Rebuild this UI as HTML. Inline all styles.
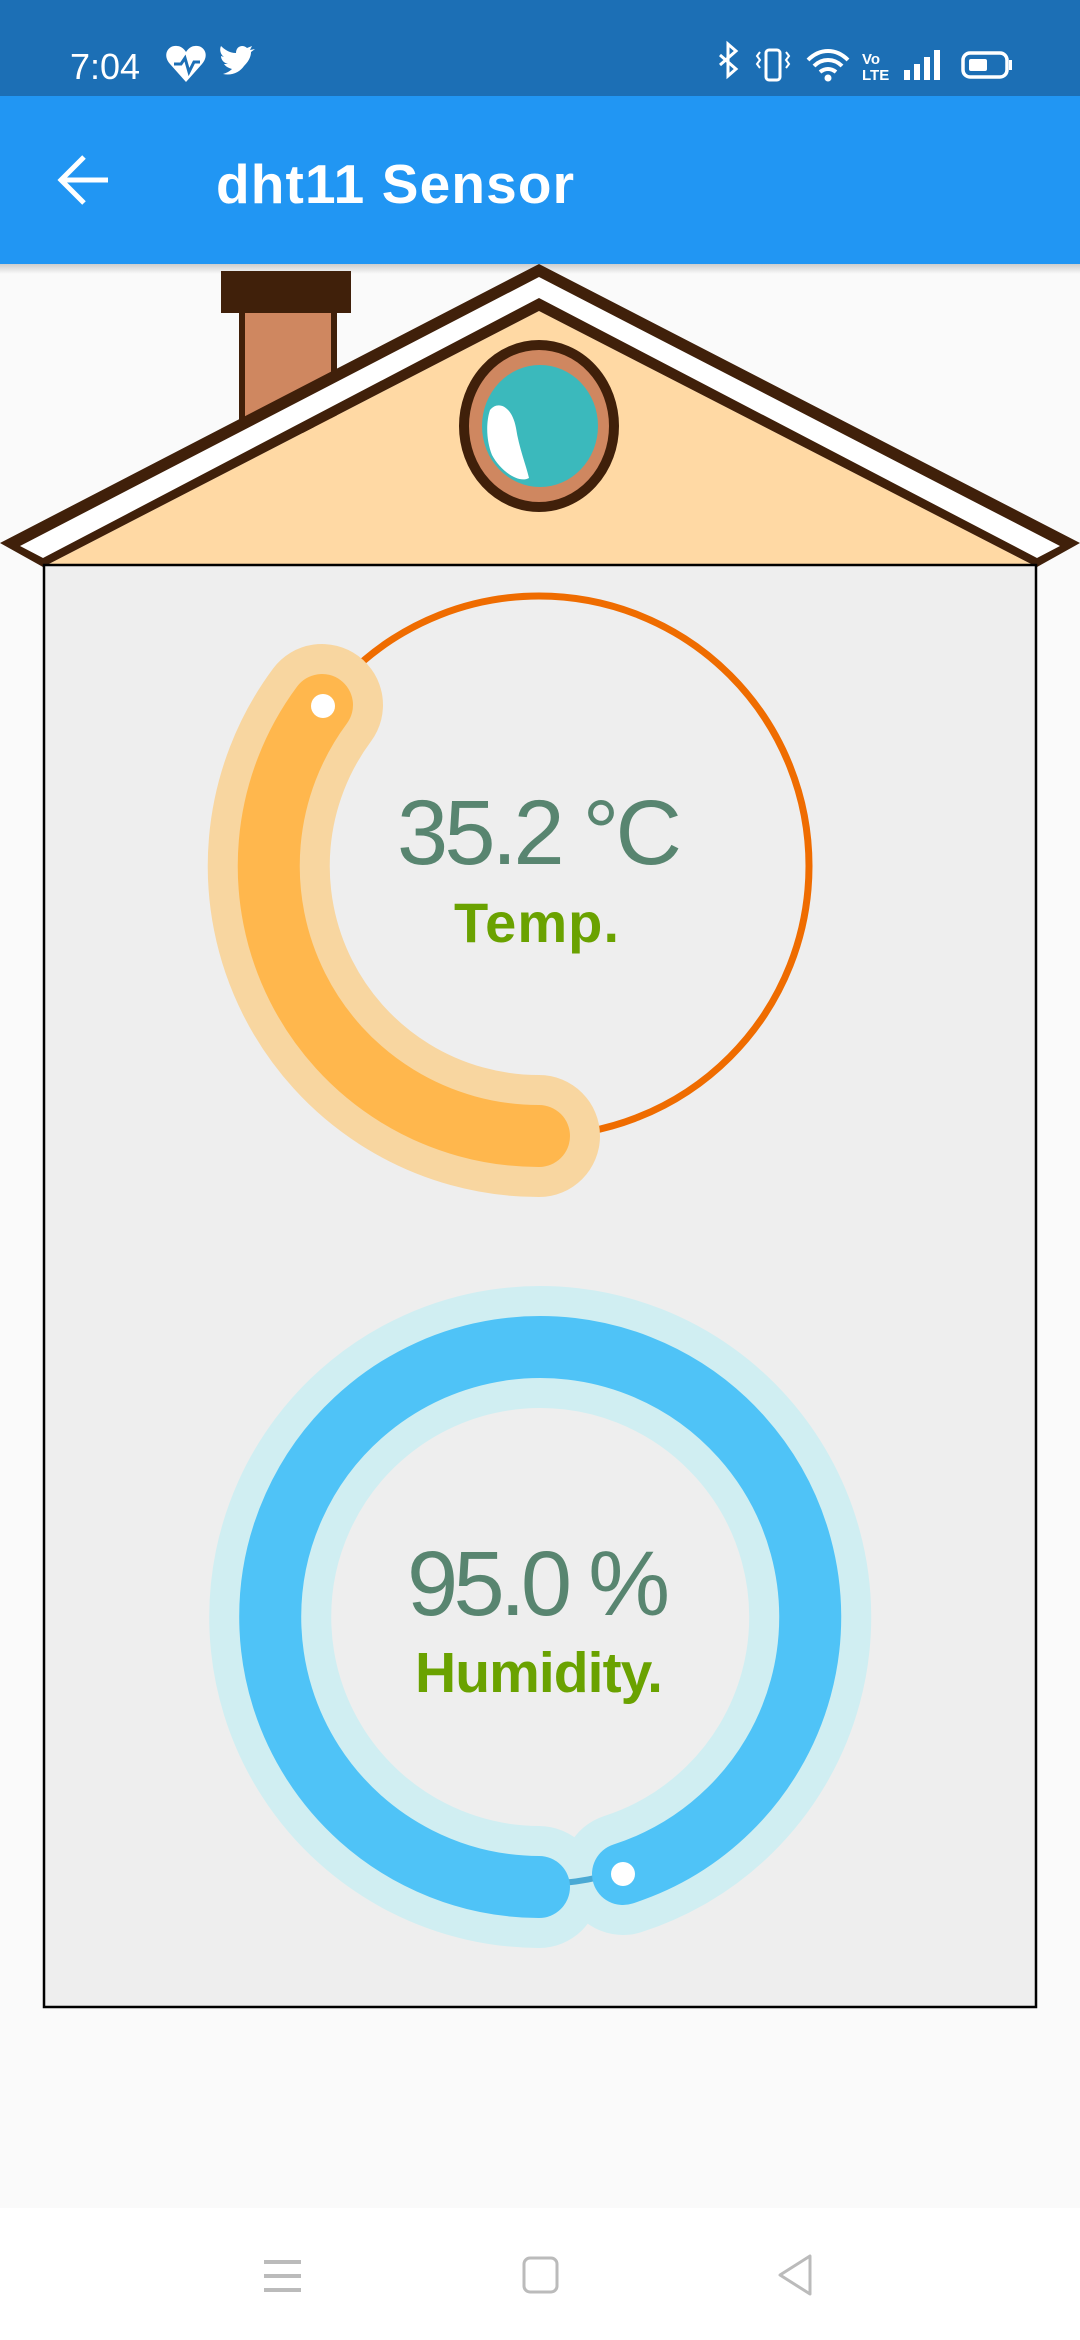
<!DOCTYPE html>
<html><head><meta charset="utf-8"><style>
html,body{margin:0;padding:0;width:1080px;height:2340px;overflow:hidden;background:#fafafa}
svg{display:block}
</style></head><body>
<svg width="1080" height="2340" viewBox="0 0 1080 2340" xmlns="http://www.w3.org/2000/svg" font-family="Liberation Sans, sans-serif">
<defs>
<linearGradient id="sh" x1="0" y1="0" x2="0" y2="1"><stop offset="0" stop-color="#000" stop-opacity="0.18"/><stop offset="1" stop-color="#000" stop-opacity="0"/></linearGradient>
</defs>
<rect x="0" y="0" width="1080" height="2340" fill="#fafafa"/>
<!-- status bar -->
<rect x="0" y="0" width="1080" height="96" fill="#1c6fb5"/>
<text x="70" y="79" font-size="36" fill="#fff">7:04</text>
<path d="M186,82 L170,64 C162,55 168,45 177,46 C181,46 184,49 186,52 C188,49 191,46 195,46 C204,45 210,55 202,64 Z" fill="#fff"/>
<path d="M174,64 L181,64 L185,58 L189,72 L194,62 L200,62" fill="none" stroke="#1c6fb5" stroke-width="3"/>
<path d="M223,74 C232,76 240,72 244,66 C250,60 251,55 251,52 L255,49 L250,50 L252,46 L247,48 C243,44 236,46 236,53 C229,53 224,49 221,46 C219,50 221,55 224,57 L221,56 C221,60 224,63 228,64 L224,64 C226,67 229,68 232,69 C229,72 226,73 223,74 Z" fill="#fff"/>
<path d="M720,55 L736,69 L728,76 L728,44 L736,51 L720,65" fill="none" stroke="#fff" stroke-width="3"/>
<rect x="766" y="50" width="14" height="30" rx="3" fill="none" stroke="#fff" stroke-width="3"/>
<path d="M760,52 l-3,4 l3,4 l-3,4 l3,4 M786,52 l3,4 l-3,4 l3,4 l-3,4" fill="none" stroke="#fff" stroke-width="2"/>
<path d="M808,60 C820,48 836,48 848,60 M814,66 C822,58 834,58 842,66 M820,72 C825,68 831,68 836,72" fill="none" stroke="#fff" stroke-width="4"/>
<circle cx="828" cy="78" r="3.5" fill="#fff"/>
<text x="862" y="64" font-size="15" font-weight="bold" fill="#fff">Vo</text>
<text x="862" y="80" font-size="15" font-weight="bold" fill="#fff">LTE</text>
<rect x="904" y="70" width="6" height="10" fill="#fff"/><rect x="914" y="64" width="6" height="16" fill="#fff"/><rect x="924" y="57" width="6" height="23" fill="#fff"/><rect x="934" y="50" width="6" height="30" fill="#fff"/>
<rect x="963" y="53" width="44" height="24" rx="7" fill="none" stroke="#fff" stroke-width="3.5"/>
<rect x="969" y="59" width="18" height="12" rx="2" fill="#fff"/>
<rect x="1009" y="60" width="3" height="10" fill="#fff"/>
<!-- app bar -->
<rect x="0" y="96" width="1080" height="168" fill="#2196f3"/>
<rect x="0" y="264" width="1080" height="10" fill="url(#sh)"/>
<path d="M108,180 L62,180 M84,157 L61,180 L84,203" fill="none" stroke="#fff" stroke-width="5"/>
<text x="216" y="203" font-size="55" font-weight="bold" fill="#fff" textLength="358">dht11 Sensor</text>
<!-- chimney -->
<rect x="242" y="310" width="92" height="120" fill="#cf8760" stroke="#40200a" stroke-width="6"/>
<rect x="221" y="271" width="130" height="42" fill="#40200a"/>
<!-- roof -->
<polygon points="539,311 43,567 1037,567" fill="#ffd9a4"/>
<polygon points="0,543 539,264 1080,543 1037,567 539,311 43,567" fill="#40200a"/>
<polygon points="20,546 539,277 1060,546 1037,558 539,298 43,558" fill="#fff"/>
<!-- window -->
<ellipse cx="539" cy="426" rx="75" ry="81" fill="#cf8760" stroke="#40200a" stroke-width="10"/>
<ellipse cx="540" cy="426" rx="58" ry="61" fill="#3bb9bc"/>
<path d="M490,410 C498,400 512,406 516,428 C519,448 526,465 529,478 C518,484 500,470 492,455 C486,440 486,422 490,410 Z" fill="#fff"/>
<!-- wall -->
<rect x="44" y="565" width="992" height="1442" fill="#eeeeee" stroke="#000" stroke-width="2.5"/>
<!-- temp gauge -->
<circle cx="539" cy="866" r="270" fill="none" stroke="#ef6c00" stroke-width="7"/>
<path d="M539,1136 A270,270 0 0 1 322,705" fill="none" stroke="#f8d6a0" stroke-width="122" stroke-linecap="round"/>
<path d="M539,1136 A270,270 0 0 1 322,705" fill="none" stroke="#ffb74d" stroke-width="62" stroke-linecap="round"/>
<circle cx="323" cy="706" r="12" fill="#fff"/>
<text x="397" y="864" font-size="92" fill="#588570" textLength="285">35.2 °C</text>
<text x="454" y="942" font-size="56" font-weight="bold" fill="#6aa200" textLength="165">Temp.</text>
<!-- humidity gauge -->
<path d="M539,1887 A270,270 0 1 1 623,1874" fill="none" stroke="#d0eef2" stroke-width="122" stroke-linecap="round"/>
<circle cx="539" cy="1617" r="267" fill="none" stroke="#4aa9d4" stroke-width="6"/>
<path d="M539,1887 A270,270 0 1 1 623,1874" fill="none" stroke="#4fc3f7" stroke-width="62" stroke-linecap="round"/>
<circle cx="623" cy="1874" r="12" fill="#fff"/>
<text x="407" y="1615" font-size="92" fill="#588570" textLength="263">95.0 %</text>
<text x="415" y="1692" font-size="57" font-weight="bold" fill="#6aa200" textLength="248">Humidity.</text>
<!-- nav bar -->
<rect x="0" y="2208" width="1080" height="132" fill="#fff"/>
<rect x="264" y="2260" width="37" height="4" fill="#bbb"/><rect x="264" y="2274" width="37" height="4" fill="#bbb"/><rect x="264" y="2288" width="37" height="4" fill="#bbb"/>
<rect x="524" y="2258" width="33" height="34" rx="6" fill="none" stroke="#bbb" stroke-width="3"/>
<path d="M810,2256 L810,2294 L780,2275 Z" fill="none" stroke="#bbb" stroke-width="3" stroke-linejoin="round"/>
</svg>
</body></html>
